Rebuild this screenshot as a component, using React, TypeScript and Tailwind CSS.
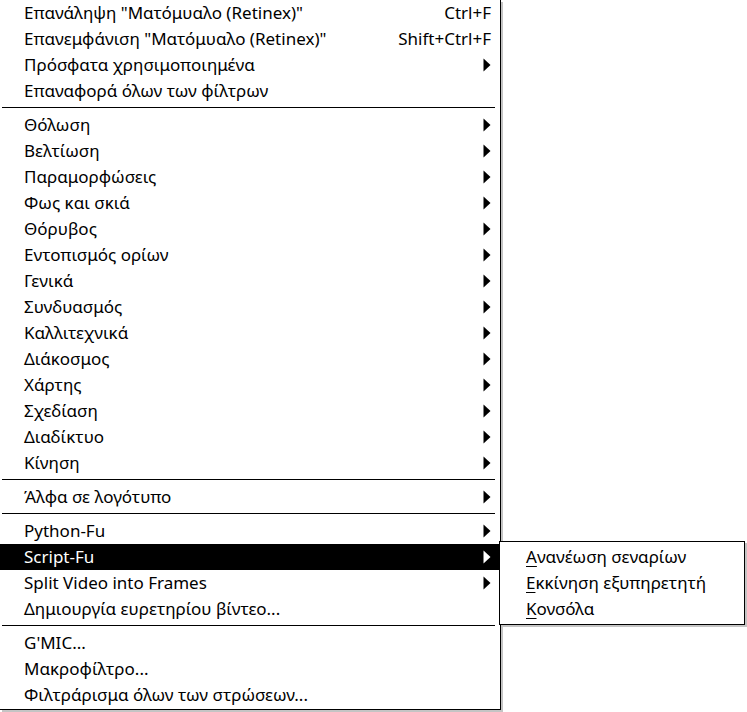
import React from "react";

type Item =
  | { kind: "item"; label: string; shortcut?: string; arrow?: boolean; active?: boolean }
  | { kind: "sep" };

const items: Item[] = [
  { kind: "item", label: 'Επανάληψη "Ματόμυαλο (Retinex)"', shortcut: "Ctrl+F" },
  { kind: "item", label: 'Επανεμφάνιση "Ματόμυαλο (Retinex)"', shortcut: "Shift+Ctrl+F" },
  { kind: "item", label: "Πρόσφατα χρησιμοποιημένα", arrow: true },
  { kind: "item", label: "Επαναφορά όλων των φίλτρων" },
  { kind: "sep" },
  { kind: "item", label: "Θόλωση", arrow: true },
  { kind: "item", label: "Βελτίωση", arrow: true },
  { kind: "item", label: "Παραμορφώσεις", arrow: true },
  { kind: "item", label: "Φως και σκιά", arrow: true },
  { kind: "item", label: "Θόρυβος", arrow: true },
  { kind: "item", label: "Εντοπισμός ορίων", arrow: true },
  { kind: "item", label: "Γενικά", arrow: true },
  { kind: "item", label: "Συνδυασμός", arrow: true },
  { kind: "item", label: "Καλλιτεχνικά", arrow: true },
  { kind: "item", label: "Διάκοσμος", arrow: true },
  { kind: "item", label: "Χάρτης", arrow: true },
  { kind: "item", label: "Σχεδίαση", arrow: true },
  { kind: "item", label: "Διαδίκτυο", arrow: true },
  { kind: "item", label: "Κίνηση", arrow: true },
  { kind: "sep" },
  { kind: "item", label: "Άλφα σε λογότυπο", arrow: true },
  { kind: "sep" },
  { kind: "item", label: "Python-Fu", arrow: true },
  { kind: "item", label: "Script-Fu", arrow: true, active: true },
  { kind: "item", label: "Split Video into Frames", arrow: true },
  { kind: "item", label: "Δημιουργία ευρετηρίου βίντεο..." },
  { kind: "sep" },
  { kind: "item", label: "G'MIC..." },
  { kind: "item", label: "Μακροφίλτρο..." },
  { kind: "item", label: "Φιλτράρισμα όλων των στρώσεων..." },
];

function Arrow({ white }: { white?: boolean }) {
  return (
    <svg width="8" height="14" viewBox="0 0 8 14" className="shrink-0">
      <polygon points="0.5,0.5 7.5,7 0.5,13.5" fill={white ? "#ffffff" : "#000000"} />
    </svg>
  );
}

const sub = [
  { first: "Α", rest: "νανέωση σεναρίων" },
  { first: "Ε", rest: "κκίνηση εξυπηρετητή" },
  { first: "Κ", rest: "ονσόλα" },
];

export default function App() {
  return (
    <div
      className="relative w-[747px] h-[712px] bg-white overflow-hidden text-black text-[17px]"
      style={{ fontFamily: '"Noto Sans", "DejaVu Sans", sans-serif' }}
    >
      <div className="w-[501px] border-r border-b border-black shadow-[2px_2px_0_#c4c4c4] bg-white pb-[1px]">
        {items.map((it, i) =>
          it.kind === "sep" ? (
            <div key={i} className="h-[8px] pt-[3px] pl-[2px] pr-[5px]">
              <div className="h-px bg-black" />
            </div>
          ) : (
            <div
              key={i}
              className={
                "h-[26px] flex items-center pl-[24px] pr-[9px] " +
                (it.active ? "bg-black text-white" : "")
              }
            >
              <span className="flex-1 whitespace-nowrap leading-none -mt-[2px]">{it.label}</span>
              {it.shortcut && (
                <span className="whitespace-nowrap leading-none -mt-[2px]">{it.shortcut}</span>
              )}
              {it.arrow && <Arrow white={it.active} />}
            </div>
          )
        )}
      </div>
      <div className="absolute left-[499px] top-[541px] w-[246px] border border-black bg-white py-[2px] shadow-[2px_2px_0_#c4c4c4]">
        {sub.map((s, i) => (
          <div key={i} className="h-[26px] flex items-center pl-[26px] whitespace-nowrap leading-none">
            <span className="-mt-[2px]">
              <span className="underline decoration-1 underline-offset-[3px]">{s.first}</span>
              <span>{s.rest}</span>
            </span>
          </div>
        ))}
      </div>
    </div>
  );
}
